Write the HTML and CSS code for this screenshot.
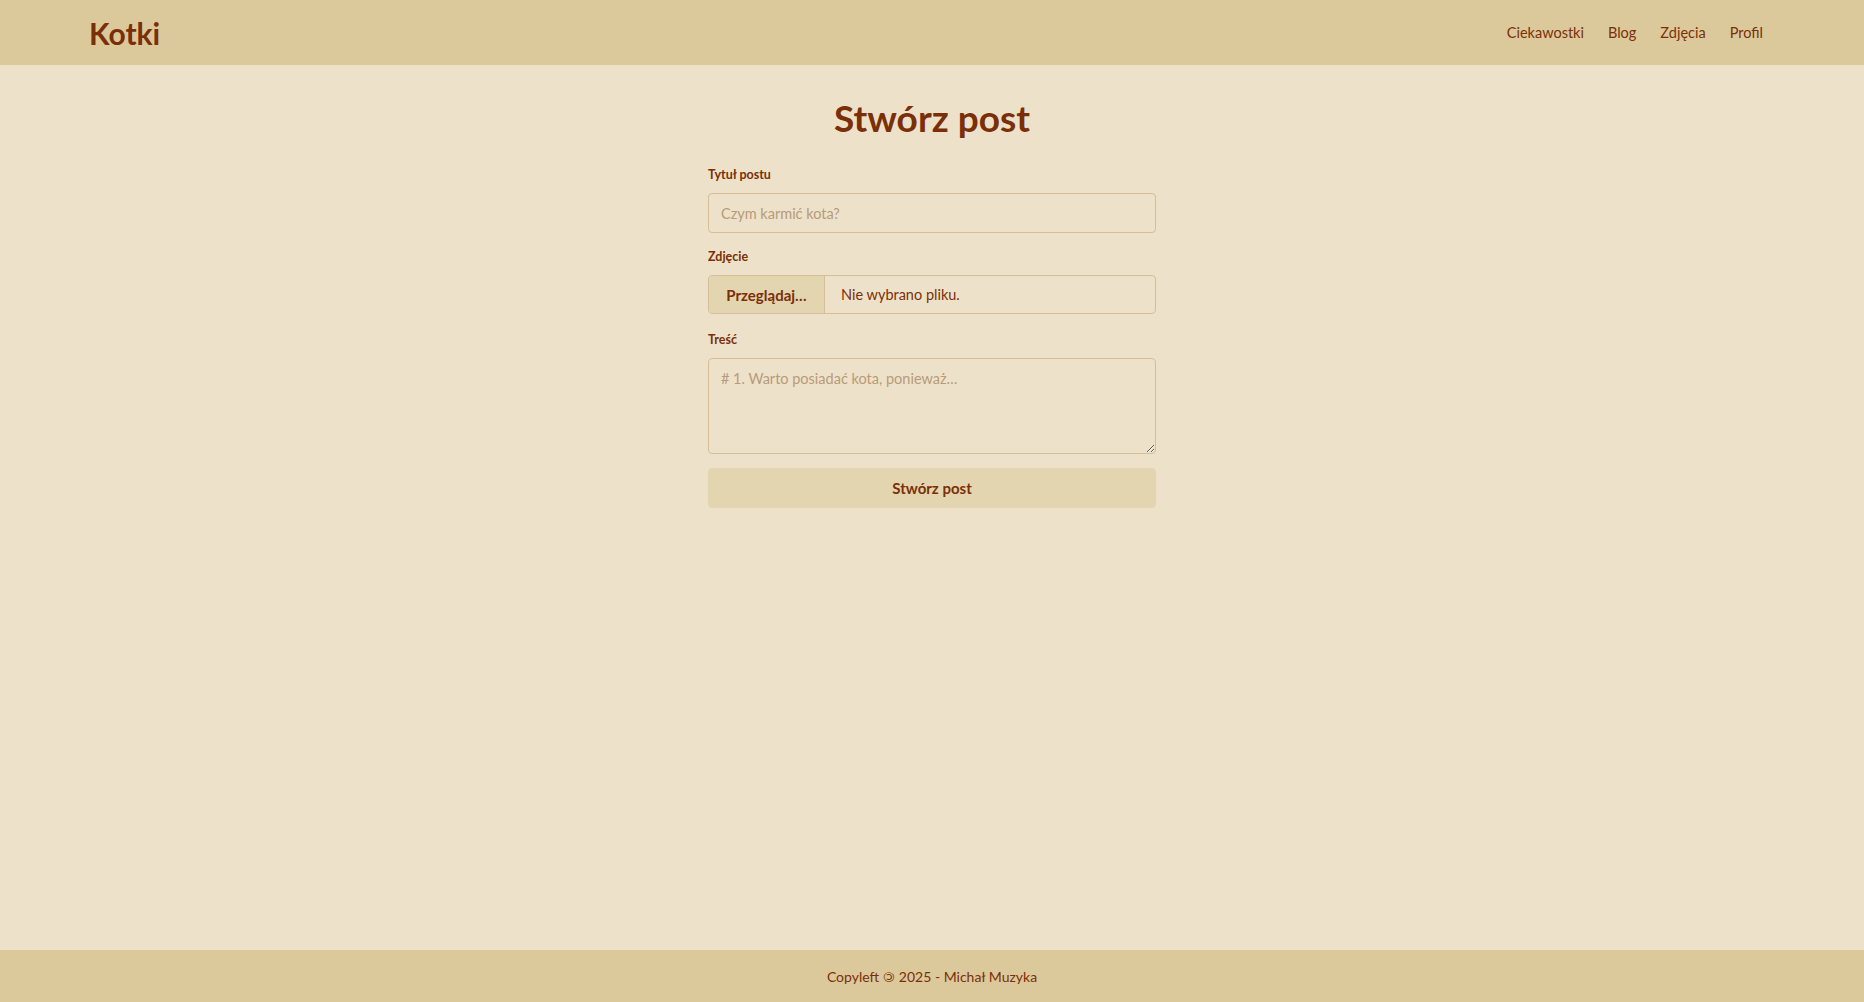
FILE: index.html
```html
<!DOCTYPE html>
<html lang="pl">
<head>
<meta charset="utf-8">
<title>Kotki - Stwórz post</title>
<link rel="stylesheet" href="styles.css">
</head>
<body>
<header class="navbar">
  <a class="brand" href="#">Kotki</a>
  <nav class="nav">
    <a href="#">Ciekawostki</a>
    <a href="#">Blog</a>
    <a href="#">Zdjęcia</a>
    <a href="#">Profil</a>
  </nav>
</header>
<main class="main">
  <h1 class="title">Stwórz post</h1>
  <form class="form">
    <label class="label" for="t">Tytuł postu</label>
    <input class="input" id="t" type="text" placeholder="Czym karmić kota?">
    <label class="label">Zdjęcie</label>
    <div class="file">
      <span class="file-btn">Przeglądaj…</span>
      <span class="file-name">Nie wybrano pliku.</span>
    </div>
    <label class="label" for="c">Treść</label>
    <textarea class="textarea" id="c" placeholder="# 1. Warto posiadać kota, ponieważ…"></textarea>
    <button class="submit" type="button">Stwórz post</button>
  </form>
</main>
<footer class="footer">Copyleft <span class="copyleft">©</span> 2025 - Michał Muzyka</footer>
</body>
</html>
```
FILE: styles.css
```css
* { box-sizing: border-box; }
html, body { height: 100%; }
body {
  margin: 0;
  display: flex;
  flex-direction: column;
  background: #ede2c9;
  color: #7b2f08;
  font-family: Lato, "Open Sans", sans-serif;
}
.navbar {
  height: 65px;
  background: #dbc99b;
  display: flex;
  align-items: center;
  justify-content: space-between;
  padding: 0 89px;
  flex: none;
}
.brand {
  color: #7b2f08;
  text-decoration: none;
  font-weight: 700;
  font-size: 30px;
  margin-top: 0;
}
.nav { display: flex; }
.nav a {
  color: #7b2f08;
  text-decoration: none;
  font-size: 14.5px;
  padding: 0 12px;
}
.main {
  flex: 1;
  display: flex;
  flex-direction: column;
  align-items: center;
}
.title {
  margin: 28px 0 0;
  font-size: 37px;
  font-weight: 700;
  line-height: 50px;
}
.form {
  width: 448px;
  display: flex;
  flex-direction: column;
  margin-top: 24px;
}
.label {
  font-size: 12.5px;
  font-weight: 700;
  line-height: 16px;
  margin-bottom: 10px;
}
.input, .textarea, .file {
  width: 100%;
  border: 1px solid #d7bd9a;
  border-radius: 4px;
  background: #ede2c9;
  font-family: inherit;
  font-size: 14.5px;
  color: #7b2f08;
}
.input {
  height: 40px;
  padding: 0 12px;
  margin-bottom: 16px;
}
.input::placeholder, .textarea::placeholder { color: #b89a7a; opacity: 1; }
.file {
  height: 39px;
  display: flex;
  align-items: stretch;
  margin-bottom: 18px;
  overflow: hidden;
}
.file-btn {
  width: 116px;
  background: #e3d5b0;
  border-right: 1px solid #d7bd9a;
  display: flex;
  align-items: center;
  justify-content: center;
  font-weight: 700;
  font-size: 15px;
}
.file-name {
  display: flex;
  align-items: center;
  padding-left: 16px;
}
.textarea {
  height: 96px;
  padding: 10px 12px;
  resize: vertical;
  margin-bottom: 14px;
  line-height: 20px;
}
.submit {
  height: 40px;
  border: none;
  border-radius: 4px;
  background: #e3d5b0;
  color: #7b2f08;
  font-family: inherit;
  font-size: 15px;
  font-weight: 700;
}
.footer {
  flex: none;
  height: 52px;
  background: #dbc99b;
  display: flex;
  align-items: center;
  justify-content: center;
  font-size: 14px;
}
.copyleft {
  display: inline-block;
  transform: scaleX(-1);
  margin: 0 4px;
}
```
